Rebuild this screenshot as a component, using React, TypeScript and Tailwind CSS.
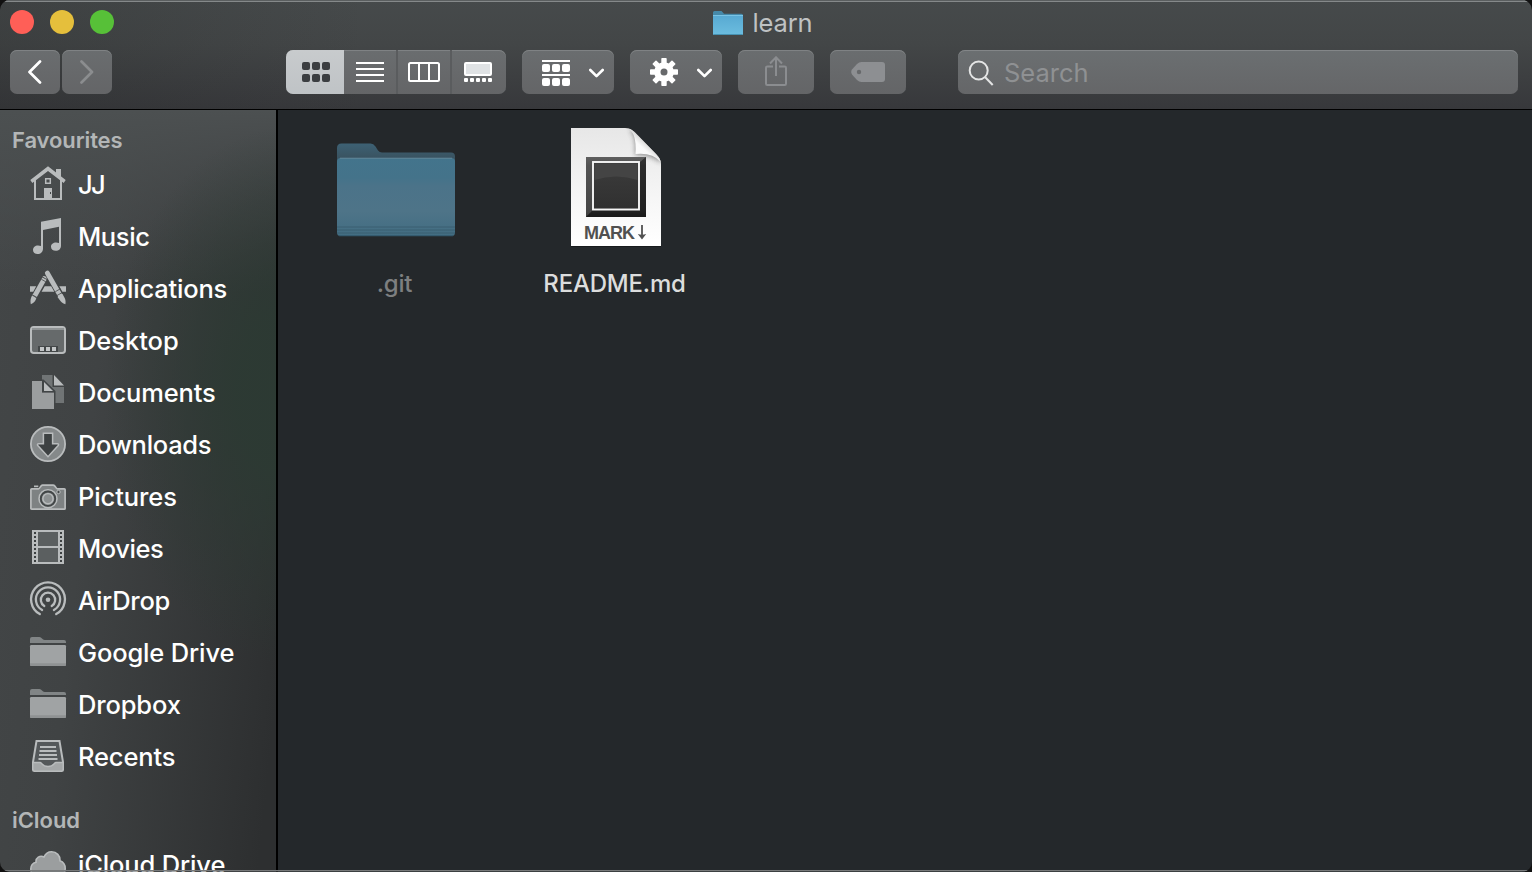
import type { ReactNode } from "react";

const LIGHT = "#b9bcbd";
const MID = "#9b9e9f";

function Glyph({ children }: { children: ReactNode }) {
  return (
    <svg className="h-9 w-9 shrink-0 overflow-visible" viewBox="0 0 36 36" fill="none">
      {children}
    </svg>
  );
}

const HomeIcon = () => (
  <Glyph>
    <path d="M26 9V3h5v9z" fill={LIGHT} />
    <path d="M5 14v19h26V14" stroke={LIGHT} strokeWidth="2" />
    <path d="M18 .3 .3 14l2 3L18 5l15.700 12 2-3z" fill={LIGHT} />
    <path d="M15.700 12.700h4.600v4.600h-4.600z" stroke={LIGHT} strokeWidth="1.500" />
    <path d="M14 22h8v12h-8z" fill={LIGHT} />
    <path d="M20 26h1v2h-1z" fill="#45494a" />
  </Glyph>
);

const MusicIcon = () => (
  <Glyph>
    <path
      d="M11 3.700 31 0v27.500c0 3.300-2 5.300-5.300 5.300-2.700 0-4.700-1.600-4.700-4 0-2.600 2.200-4.300 5-4.300 1.200 0 2.200.2 3 .6V8.800L13 12v18.400c0 3.400-2.200 5.600-5.400 5.600C5 36 3 34.400 3 32c0-2.600 2.100-4.600 5-4.600 1.100 0 2.200.2 3 .7z"
      fill={LIGHT}
    />
  </Glyph>
);

const ApplicationsIcon = () => (
  <Glyph>
    <path d="M0 16.300h6.200L3.200 21.700H0zM14.700 16.300h6.500l3.100 5.400H11.600zM29.300 16.300H36v5.400h-3.600z" fill={LIGHT} />
    <path d="M14.500 8.600 4.500 26.200" stroke={LIGHT} strokeWidth="4.800" />
    <path d="M12.500 6.500c1.500-1.400 4.500.2 4.100 2.500z" fill={LIGHT} />
    <path d="m2.100 25.600 4.200 2.400c-.4 2.500-2 4.900-5.500 6.200C.1 31 .6 28.200 2.100 25.600z" fill={LIGHT} />
    <path d="m17.300 3 13 22.700" stroke={LIGHT} strokeWidth="4.800" strokeLinecap="round" />
    <path d="m27.500 27 5-3 2.300 4.300c.9 2 .9 4 .6 6-2.700-.7-4.600-2.400-5.700-4.200z" fill={LIGHT} />
    <path d="m11.300 9.200 4.500 2.600M3 25.200l4 2.300M25.300 21.700l5-2.900M27 25.500l5.300-3" stroke="#414546" strokeWidth=".8" />
  </Glyph>
);

const DesktopIcon = () => (
  <Glyph>
    <rect x="1" y="5" width="34" height="26" rx="2.800" fill="#666a6b" stroke={LIGHT} strokeWidth="2" />
    <path d="M2 7h32" stroke="#909495" strokeWidth="2" />
    <path d="M8 24h20v6H8z" fill="#434748" />
    <path d="M10 25h4v4h-4zM16 25h4v4h-4zM22 25h4v4h-4z" fill="#c3c6c7" />
  </Glyph>
);

const DocumentsIcon = () => (
  <Glyph>
    <path d="M12 1h10.500v12H34v16H12z" fill="#707475" />
    <path d="M24 1v10.500h10z" fill={LIGHT} />
    <path d="M12 5.500h1.500L25.500 17v12H24V18L13 7h-1z" fill="#414546" />
    <path d="M2 7h10v11.500h12V35H2z" fill={MID} />
    <path d="M12 7h2l10 10v1.500H12z" fill="#414546" />
    <path d="M14 8v9h9z" fill={LIGHT} />
  </Glyph>
);

const DownloadsIcon = () => (
  <Glyph>
    <circle cx="18" cy="18" r="17.100" fill="#85898a" stroke={LIGHT} strokeWidth="1.800" />
    <path
      d="M13.400 7.300h9.200v10.500h4.800c1.100 0 1.500.8.8 1.700L18 30.700 7.800 19.500c-.7-.9-.3-1.700.8-1.700h4.800z"
      fill="#3d4142"
      stroke={LIGHT}
      strokeWidth="1.500"
    />
  </Glyph>
);

const PicturesIcon = () => (
  <Glyph>
    <path d="M4 7.500h4.300v1.700H4z" fill={LIGHT} />
    <path
      d="M1.700 10.800h6.800c1.600 0 2-3.700 4-3.700h10.700c2.300 0 2.500 3.700 4.300 3.700h6.800c.5 0 .8.300.8.800v18.800c0 .5-.3.800-.8.800H1.700c-.5 0-.8-.3-.8-.8V11.600c0-.5.300-.8.800-.8z"
      fill="#7e8283"
      stroke={LIGHT}
      strokeWidth="1.700"
    />
    <circle cx="18" cy="20.700" r="9" fill="#85898a" stroke={LIGHT} strokeWidth="1.500" />
    <circle cx="18" cy="20.700" r="7.200" stroke="#424647" strokeWidth="1.800" />
    <circle cx="18" cy="20.700" r="5.100" fill="#8d9192" stroke={LIGHT} strokeWidth="1.400" />
    <circle cx="28.500" cy="14" r="1.700" fill="#424647" stroke={LIGHT} />
  </Glyph>
);

const PERFS = [3, 7, 11, 15, 19, 23, 27, 31];

const MoviesIcon = () => (
  <Glyph>
    <path d="M2 0h32v34H2z" fill={LIGHT} />
    <path d="M8 2h20v14H8zM8 18h20v14H8z" fill="#5b5f60" />
    {PERFS.map((y) => (
      <path key={y} d={`M4 ${y - 1}h2v2h-2zM30 ${y - 1}h2v2h-2z`} fill="#3c4041" />
    ))}
  </Glyph>
);

const AirDropIcon = () => (
  <Glyph>
    <g stroke={LIGHT} strokeWidth="2.300" strokeLinecap="round">
      <path d="M9.800 32.100a16.900 16.900 0 1 1 16.400 0" />
      <path d="M12.100 28a12.100 12.100 0 1 1 11.800 0" />
      <path d="M14.300 24a7.200 7.200 0 1 1 7.400 0" />
    </g>
    <circle cx="18" cy="17.800" r="2.300" fill={LIGHT} />
  </Glyph>
);

const FolderIcon = () => (
  <Glyph>
    <path d="M0 9V5q0-2 2-2h7.500q1.500 0 2.500 1.600Q13 6 14.500 6H34q2 0 2 2v1z" fill="#818586" />
    <path d="M0 12.300Q0 11 1.300 11h33.400Q36 11 36 12.300v18.200q0 1.500-1.500 1.500h-33Q0 32 0 30.500z" fill="#a0a3a4" />
    <path d="M0 29.300h36v1.200q0 1.500-1.500 1.500h-33Q0 32 0 30.500z" fill="#8f9293" />
  </Glyph>
);

const RecentsIcon = () => (
  <Glyph>
    <path d="M6.500 3h23l3.500 21v7.500q0 1.500-1.500 1.500h-27Q3 33 3 31.500V24z" stroke={LIGHT} strokeWidth="2" fill="#54585a" />
    <path d="M3.500 24.500H10c2 0 2 4 8 4s6-4 8-4h6.500V31q0 1.500-1.500 1.500H5Q3.500 32.500 3.500 31z" fill="#a4a7a8" />
    <path d="M3 24.500h7c2 0 2 4 8 4s6-4 8-4h7" stroke={LIGHT} strokeWidth="1.400" />
    <path d="M10 9h16M9.500 13h17M9 17h18M8.500 21h19" stroke={LIGHT} strokeWidth="2" />
  </Glyph>
);

const CloudIcon = () => (
  <Glyph>
    <path
      d="M8.500 31C4 31 .8 27.500.8 23c0-3.900 2.600-6 5.200-6.700-.5-4.300 4-7.500 8-5.300C15.500 7.600 18.300 5.800 21.600 5.800c5 0 8.700 3.800 8.400 9 3.200 1.200 5.200 4 5.200 7.700 0 5-3.700 8.500-8.200 8.500z"
      fill={MID}
      stroke={LIGHT}
      strokeWidth="1.600"
    />
  </Glyph>
);

type Entry = { label: string; icon: ReactNode; tracking: string };

const FAVOURITES: Entry[] = [
  { label: "JJ", icon: <HomeIcon />, tracking: "tracking-[-1.6px]" },
  { label: "Music", icon: <MusicIcon />, tracking: "tracking-[-0.4px]" },
  { label: "Applications", icon: <ApplicationsIcon />, tracking: "tracking-[-0.2px]" },
  { label: "Desktop", icon: <DesktopIcon />, tracking: "tracking-[-0.05px]" },
  { label: "Documents", icon: <DocumentsIcon />, tracking: "tracking-[-0.15px]" },
  { label: "Downloads", icon: <DownloadsIcon />, tracking: "tracking-[-0.3px]" },
  { label: "Pictures", icon: <PicturesIcon />, tracking: "tracking-[-0.1px]" },
  { label: "Movies", icon: <MoviesIcon />, tracking: "tracking-[-0.45px]" },
  { label: "AirDrop", icon: <AirDropIcon />, tracking: "tracking-[-0.25px]" },
  { label: "Google Drive", icon: <FolderIcon />, tracking: "tracking-[-0.15px]" },
  { label: "Dropbox", icon: <FolderIcon />, tracking: "tracking-[-0.15px]" },
  { label: "Recents", icon: <RecentsIcon />, tracking: "tracking-[-0.15px]" },
];

function SidebarRow({ label, icon, tracking }: Entry) {
  return (
    <li className="flex h-[52px] shrink-0 items-center gap-3 pl-[30px]">
      {icon}
      <span className={`pt-0.5 text-[25.5px] leading-8 font-medium whitespace-nowrap text-white ${tracking}`}>{label}</span>
    </li>
  );
}

function Sidebar() {
  return (
    <nav className="flex w-[278px] shrink-0 flex-col overflow-hidden border-r-2 border-black bg-[radial-gradient(ellipse_190px_270px_at_295px_285px,#2c3a33_0%,#2c3a33e6_30%,#2c3a3366_65%,#2c3a3300_100%),linear-gradient(180deg,#4c5051_0%,#4c505100_24%),linear-gradient(96deg,#434647_0%,#404344_35%,#2d2f30_95%)]">
      <h2 className="mb-0.5 pt-3.5 pl-3 text-[22px] leading-8 font-semibold tracking-[-0.1px] text-[#b3b6b7]">Favourites</h2>
      <ul className="flex flex-col">
        {FAVOURITES.map((entry) => (
          <SidebarRow key={entry.label} {...entry} />
        ))}
      </ul>
      <h2 className="mt-[22px] mb-0.5 pl-3 text-[22px] leading-8 font-semibold tracking-[-0.05px] text-[#b3b6b7]">iCloud</h2>
      <ul className="flex flex-col">
        <SidebarRow label="iCloud Drive" icon={<CloudIcon />} tracking="tracking-[-0.15px]" />
      </ul>
    </nav>
  );
}

function ToolButton({ className, children }: { className: string; children: ReactNode }) {
  return (
    <button
      className={`flex h-11 shrink-0 items-center rounded-[7px] bg-linear-to-b from-[#6a6d6f] to-[#646567] shadow-[inset_0_1px_0_#7f8284] ${className}`}
    >
      {children}
    </button>
  );
}

const Chevron = () => (
  <svg className="mt-px h-3 w-4" viewBox="0 0 16 12" fill="none">
    <path d="m2.300 3 6.200 6.200L14.700 3" stroke="#fff" strokeWidth="2.600" strokeLinecap="round" strokeLinejoin="round" />
  </svg>
);

const GearIcon = () => (
  <svg className="h-7 w-7" viewBox="-14 -14 28 28">
    <g fill="#fff">
      {[0, 45, 90, 135].map((angle) => (
        <rect key={angle} x="-2.700" y="-14" width="5.400" height="28" rx=".8" transform={`rotate(${angle})`} />
      ))}
      <circle r="9.800" />
    </g>
    <circle r="3.500" fill="#67696b" />
  </svg>
);

function ViewSwitcher() {
  return (
    <div className="flex h-11 w-[220px] shrink-0 overflow-hidden rounded-[7px] bg-linear-to-b from-[#6a6d6f] to-[#646567] shadow-[inset_0_1px_0_#7f8284]">
      <button className="flex w-[58px] items-center justify-center bg-linear-to-b from-[#c8cbcd] to-[#bfc3c6] pl-0.5">
        <svg className="h-5 w-7" viewBox="0 0 28 20" fill="#3b3e41">
          {[0, 10, 20].map((x) => (
            <g key={x}>
              <rect x={x} width="8" height="8" rx="2" />
              <rect x={x} y="12" width="8" height="8" rx="2" />
            </g>
          ))}
        </svg>
      </button>
      <button className="flex w-[54px] items-center justify-center border-r-2 border-[#5a5c5e]">
        <svg className="h-5 w-7" viewBox="0 0 28 20" fill="#fff">
          <path d="M0 0h28v2H0zM0 6h28v2H0zM0 12h28v2H0zM0 18h28v2H0z" />
        </svg>
      </button>
      <button className="flex w-[54px] items-center justify-center border-r-2 border-[#5a5c5e]">
        <svg className="h-5 w-8" viewBox="0 0 32 20" fill="none" stroke="#fff" strokeWidth="2">
          <rect x="1" y="1" width="30" height="18" rx="1.500" />
          <path d="M11 1v18M21 1v18" />
        </svg>
      </button>
      <button className="flex w-[54px] items-center justify-center pr-0.5">
        <svg className="h-5 w-7" viewBox="0 0 28 20">
          <rect x="1" y="1" width="26" height="12" rx="1" fill="#dfe2e4" stroke="#fff" strokeWidth="2" />
          {[0, 6, 12, 18, 24].map((x) => (
            <rect key={x} x={x} y="16" width="4" height="4" rx="1" fill="#fff" />
          ))}
        </svg>
      </button>
    </div>
  );
}

function SmallFolder() {
  return (
    <svg className="h-6 w-[30px]" viewBox="0 0 30 24">
      <defs>
        <linearGradient id="small-folder" x1="0" y1="0" x2="0" y2="1">
          <stop offset="0" stopColor="#57a9d2" />
          <stop offset="1" stopColor="#6cbddf" />
        </linearGradient>
      </defs>
      <path d="M0 5V1.500Q0 0 1.500 0h7L11 2.700h17.500q1.500 0 1.500 1.500V6H0z" fill="#4689a9" />
      <rect y="4" width="30" height="20" rx="1" fill="url(#small-folder)" />
      <path d="M0 4.500h30" stroke="#79c3e4" />
      <path d="M.5 23.500h29" stroke="#4792b2" />
    </svg>
  );
}

function Toolbar() {
  return (
    <header className="flex h-[110px] shrink-0 flex-col border-b border-black bg-[linear-gradient(90deg,#26282840_0%,#26282800_24%),linear-gradient(180deg,#464a4b_0%,#434647_40%,#37383b_100%)] shadow-[inset_0_1px_0_#5a5e5f,inset_0_2px_0_#85898a]">
      <div className="grid h-[50px] grid-cols-[1fr_auto_1fr] items-start">
        <div className="flex gap-4 pt-2.5 pl-2.5">
          <span className="h-6 w-6 rounded-full bg-[#ff5f57]" />
          <span className="h-6 w-6 rounded-full bg-[#e5bf3c]" />
          <span className="h-6 w-6 rounded-full bg-[#57c038]" />
        </div>
        <div className="flex items-center gap-2 pt-[7px] pr-1.5">
          <span className="-mt-px pr-px">
            <SmallFolder />
          </span>
          <h1 className="text-[25.500px] leading-8 tracking-[-0.1px] text-[#bfc2c3]">learn</h1>
        </div>
        <div />
      </div>
      <div className="flex pr-3.5 pl-2.5">
        <div className="flex gap-0.5">
          <ToolButton className="w-[50px] justify-center">
            <svg className="mr-0.5 h-6 w-4" viewBox="0 0 16 24" fill="none">
              <path d="M14 1.500 3.500 12 14 22.500" stroke="#fff" strokeWidth="2.700" strokeLinecap="round" strokeLinejoin="round" />
            </svg>
          </ToolButton>
          <ToolButton className="w-[50px] justify-center">
            <svg className="h-6 w-4" viewBox="0 0 16 24" fill="none">
              <path d="M2.500 1.500 13 12 2.500 22.500" stroke="#8b8d8f" strokeWidth="2.700" strokeLinecap="round" strokeLinejoin="round" />
            </svg>
          </ToolButton>
        </div>
        <div className="ml-[174px] flex gap-4">
          <ViewSwitcher />
          <ToolButton className="w-[92px] gap-[18px] pl-5">
            <svg className="mt-0.5 h-[26px] w-7" viewBox="0 0 28 26" fill="#fff">
              <path d="M0 0h28v2H0zM0 14h28v2H0z" />
              {[0, 10, 20].map((x) => (
                <g key={x}>
                  <rect x={x} y="4" width="8" height="8" rx="2" />
                  <rect x={x} y="18" width="8" height="8" rx="2" />
                </g>
              ))}
            </svg>
            <Chevron />
          </ToolButton>
          <ToolButton className="w-[92px] gap-[18px] pl-5">
            <GearIcon />
            <Chevron />
          </ToolButton>
          <ToolButton className="w-[76px] justify-center">
            <svg className="mb-0.5 h-[30px] w-[22px]" viewBox="0 0 22 30" fill="none" stroke="#8b8d90" strokeWidth="2">
              <path d="M8 10.500H2.300Q1 10.500 1 11.800v15.900Q1 29 2.300 29h17.400q1.300 0 1.300-1.300V11.800q0-1.300-1.300-1.300H14M11 20V2M5 7.500 11 1.300l6 6.200" />
            </svg>
          </ToolButton>
          <ToolButton className="w-[76px] justify-center">
            <svg className="h-5 w-[34px]" viewBox="0 0 34 20">
              <path d="M10.500 0H31q3 0 3 3v14q0 3-3 3H10.500Q8 20 6 18L1.200 12.700Q-.8 10 1.200 7.300L6 2Q8 0 10.500 0z" fill="#8d8f92" />
              <circle cx="8" cy="10" r="2.200" fill="#67696b" />
            </svg>
          </ToolButton>
        </div>
        <label className="ml-[52px] flex h-11 grow items-center gap-2.5 rounded-[7px] bg-linear-to-b from-[#6b6f71] to-[#656668] pl-2.5 shadow-[inset_0_1px_0_#838688]">
          <svg className="mt-0.5 h-[26px] w-[26px]" viewBox="0 0 26 26" fill="none" stroke="#e4e5e5" strokeWidth="2">
            <circle cx="10.700" cy="10.500" r="9" />
            <path d="m17 17 7.700 8" />
          </svg>
          <span className="pt-0.5 text-[25.500px] leading-8 tracking-[0px] text-[#8f9193]">Search</span>
        </label>
      </div>
    </header>
  );
}

function LargeFolder() {
  return (
    <svg className="h-[94px] w-[118px]" viewBox="0 0 118 94">
      <defs>
        <linearGradient id="folder-front" x1="0" y1="0" x2="0" y2="1">
          <stop offset="0" stopColor="#43748c" />
          <stop offset=".25" stopColor="#44738a" />
          <stop offset=".36" stopColor="#4b7389" />
          <stop offset=".68" stopColor="#4e7488" />
          <stop offset="1" stopColor="#426d82" />
        </linearGradient>
        <linearGradient id="folder-back" x1="0" y1="0" x2="0" y2="1">
          <stop offset="0" stopColor="#3d6174" />
          <stop offset=".18" stopColor="#39515e" />
        </linearGradient>
      </defs>
      <path d="M0 90V5q0-4.500 4.500-4.500h29q3 0 5 3l2.500 4Q42.500 9.500 45 9.500h69q4 0 4 4V90z" fill="url(#folder-back)" />
      <rect y="15" width="118" height="78" rx="3.500" fill="url(#folder-front)" />
      <path d="M3 15.200h112" stroke="#67899a" strokeWidth=".9" />
      <path d="M0 84h118M0 87h118M0 90h118" stroke="#375b6d" strokeWidth=".8" />
      <path d="M2 92.800h114" stroke="#315567" />
    </svg>
  );
}

function MarkdownFile() {
  return (
    <svg className="h-[118px] w-[90px] overflow-visible" viewBox="0 0 90 118">
      <defs>
        <linearGradient id="paper" x1="0" y1="0" x2="0" y2="1">
          <stop offset="0" stopColor="#e7e7e7" />
          <stop offset=".6" stopColor="#f6f6f6" />
          <stop offset="1" stopColor="#fff" />
        </linearGradient>
        <linearGradient id="curl" x1="0" y1="1" x2=".6" y2=".35">
          <stop offset="0" stopColor="#fff" />
          <stop offset=".7" stopColor="#fafafa" />
          <stop offset="1" stopColor="#c8c8c8" />
        </linearGradient>
        <linearGradient id="frame" x1="0" y1="0" x2="0" y2="1">
          <stop offset="0" stopColor="#5a5a5a" />
          <stop offset=".14" stopColor="#454545" />
          <stop offset=".9" stopColor="#303030" />
          <stop offset="1" stopColor="#202020" />
        </linearGradient>
        <linearGradient id="panel" x1="0" y1="0" x2="0" y2="1">
          <stop offset="0" stopColor="#3c3c3c" />
          <stop offset="1" stopColor="#303030" />
        </linearGradient>
        <filter id="soft" x="-50%" y="-50%" width="200%" height="200%">
          <feGaussianBlur stdDeviation="2.500" />
        </filter>
        <clipPath id="sheet">
          <path d="M0 0h54q5 0 9.500 4L85 26q5 5 5 10v82H0z" />
        </clipPath>
      </defs>
      <path d="M0 0h54q5 0 9.500 4L85 26q5 5 5 10v83H0z" fill="#0c0e0f" opacity=".5" />
      <path d="M0 0h54q5 0 9.500 4L85 26q5 5 5 10v82H0z" fill="url(#paper)" />
      <g clipPath="url(#sheet)">
        <path d="M59 2q7 7 5 25 16-1 26 8V20L66 0z" fill="#333" opacity=".5" filter="url(#soft)" />
      </g>
      <path d="M56 0q10 4 8.500 26Q81 24 90 34q-1-4-5-8L63.500 4Q60 .5 56 0z" fill="url(#curl)" />
      <path d="M15 29h60v60H15z" fill="url(#frame)" />
      <path d="M15 29h60l-6 5H21zM15 29l6 5v49l-6 6z" fill="#666" opacity=".4" />
      <path d="M75 29v60l-6-6V34zM15 89h60l-6-6H21z" fill="#111" opacity=".5" />
      <rect x="22" y="34" width="46" height="47.500" fill="url(#panel)" stroke="#f6f6f6" strokeWidth="1.900" />
      <path d="M23.500 35.500h43V52q-21-7-43 0z" fill="#444" />
      <text x="13" y="111" fill="#505050" fontFamily="Liberation Sans, sans-serif" fontSize="18" fontWeight="700" textLength="51">
        MARK
      </text>
      <path d="M71 97v12" fill="none" stroke="#505050" strokeWidth="1.800" />
      <path d="M66.800 106q4.200 1.500 8.400 0L71 111.500z" fill="#505050" />
    </svg>
  );
}

function FileItem({ name, dim, children }: { name: string; dim?: boolean; children: ReactNode }) {
  return (
    <figure className="flex w-[220px] flex-col items-center">
      <div className="flex h-[140px] items-center justify-center">{children}</div>
      <figcaption
        className={`mt-[11px] pr-[3px] text-[24px] leading-8 font-[450] tracking-[-0.2px] ${dim ? "text-[#7d7f80]" : "text-[#dcdddd]"}`}
      >
        {name}
      </figcaption>
    </figure>
  );
}

export default function App() {
  return (
    <div className="h-[872px] w-[1532px] overflow-hidden bg-[#111]">
      <div className="flex h-full flex-col overflow-hidden rounded-[10px] font-['Inter','Liberation_Sans',sans-serif]">
        <Toolbar />
        <div className="flex min-h-0 grow">
          <Sidebar />
          <main className="flex grow items-start bg-[#24282b] pt-[7px] pl-2">
            <FileItem name=".git" dim>
              <div className="pt-[6px]">
                <LargeFolder />
              </div>
            </FileItem>
            <FileItem name="README.md">
              <MarkdownFile />
            </FileItem>
          </main>
        </div>
        <div className="relative -mt-0.5 h-0.5 shrink-0 border-t border-[#77797a] bg-[#54575980]" />
      </div>
    </div>
  );
}
